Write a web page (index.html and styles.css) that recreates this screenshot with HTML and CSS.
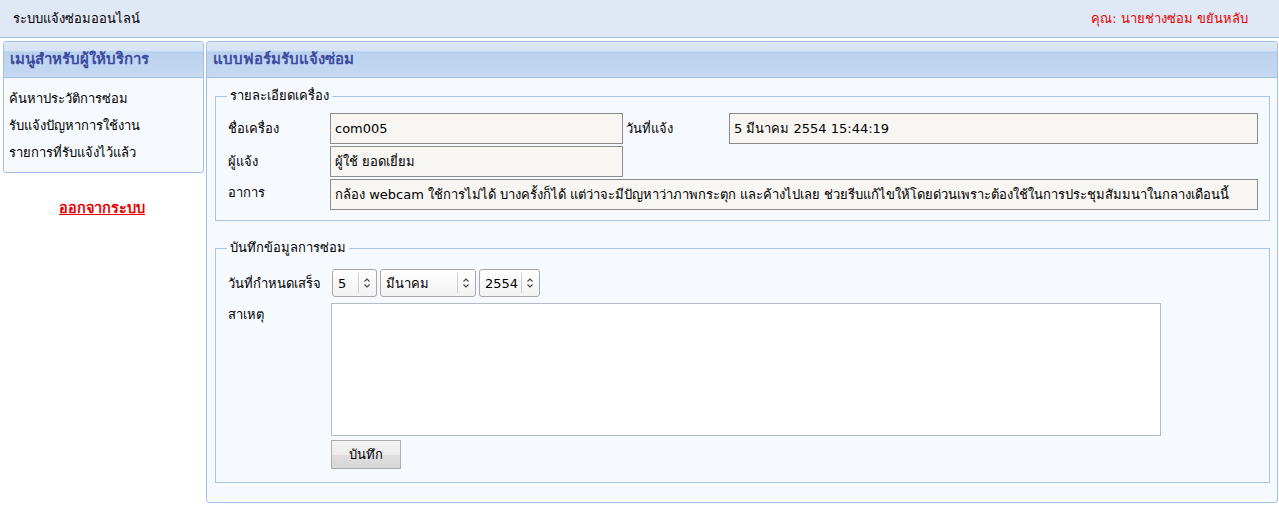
FILE: index.html
```html
<!DOCTYPE html>
<html lang="th">
<head>
<meta charset="utf-8">
<title>ระบบแจ้งซ่อมออนไลน์</title>
<link rel="stylesheet" href="styles.css">
</head>
<body>
<header class="topbar">
  <div class="site-title">ระบบแจ้งซ่อมออนไลน์</div>
  <div class="user">คุณ: นายช่างซ่อม ขยันหลับ</div>
</header>
<div class="layout">
  <aside class="side">
    <div class="panel">
      <div class="panel-head">เมนูสำหรับผู้ให้บริการ</div>
      <ul class="menu">
        <li>ค้นหาประวัติการซ่อม</li>
        <li>รับแจ้งปัญหาการใช้งาน</li>
        <li>รายการที่รับแจ้งไว้แล้ว</li>
      </ul>
    </div>
    <a class="logout" href="#">ออกจากระบบ</a>
  </aside>
  <main class="panel main">
    <div class="panel-head">แบบฟอร์มรับแจ้งซ่อม</div>
    <div class="main-body">
      <fieldset class="box">
        <legend>รายละเอียดเครื่อง</legend>
        <div class="grid-detail">
          <div class="lbl">ชื่อเครื่อง</div>
          <div class="field short">com005</div>
          <div class="lbl lbl2">วันที่แจ้ง</div>
          <div class="field date">5 มีนาคม 2554 15:44:19</div>
          <div class="lbl">ผู้แจ้ง</div>
          <div class="field short">ผู้ใช้ ยอดเยี่ยม</div>
          <div class="lbl top">อาการ</div>
          <div class="field wide">กล้อง webcam ใช้การไม่ได้ บางครั้งก็ได้ แต่ว่าจะมีปัญหาว่าภาพกระตุก และค้างไปเลย ช่วยรีบแก้ไขให้โดยด่วนเพราะต้องใช้ในการประชุมสัมมนาในกลางเดือนนี้</div>
        </div>
      </fieldset>
      <fieldset class="box box2">
        <legend>บันทึกข้อมูลการซ่อม</legend>
        <div class="grid-repair">
          <div class="lbl">วันที่กำหนดเสร็จ</div>
          <div class="selects">
            <span class="sel s-day"><select><option>5</option></select><svg class="arr" width="18" height="26" viewBox="0 0 18 26"><line x1="0.5" y1="3" x2="0.5" y2="23" stroke="#d0d0d0"/><path d="M6.5 11.5 L9 9 L11.5 11.5 M6.5 14.5 L9 17 L11.5 14.5" fill="none" stroke="#444" stroke-width="1.1"/></svg></span>
            <span class="sel s-month"><select><option>มีนาคม</option></select><svg class="arr" width="18" height="26" viewBox="0 0 18 26"><line x1="0.5" y1="3" x2="0.5" y2="23" stroke="#d0d0d0"/><path d="M6.5 11.5 L9 9 L11.5 11.5 M6.5 14.5 L9 17 L11.5 14.5" fill="none" stroke="#444" stroke-width="1.1"/></svg></span>
            <span class="sel s-year"><select><option>2554</option></select><svg class="arr" width="18" height="26" viewBox="0 0 18 26"><line x1="0.5" y1="3" x2="0.5" y2="23" stroke="#d0d0d0"/><path d="M6.5 11.5 L9 9 L11.5 11.5 M6.5 14.5 L9 17 L11.5 14.5" fill="none" stroke="#444" stroke-width="1.1"/></svg></span>
          </div>
          <div class="lbl top">สาเหตุ</div>
          <textarea class="cause"></textarea>
          <div></div>
          <button class="save" type="button">บันทึก</button>
        </div>
      </fieldset>
    </div>
  </main>
</div>
</body>
</html>
```
FILE: styles.css
```css
* { box-sizing: border-box; }
html, body { margin: 0; padding: 0; background: #fff; }
body {
  font-family: Tahoma, "DejaVu Sans", "Noto Sans", sans-serif;
  font-size: 13px;
  color: #000;
}
.topbar {
  height: 38px;
  background: #e0e8f5;
  border-bottom: 1px solid #a9bcd8;
  display: flex;
  align-items: center;
  justify-content: space-between;
  padding: 0 31px 0 13px;
}
.site-title { font-size: 13px; }
.user { color: #e60000; font-size: 13px; }

.layout {
  display: flex;
  align-items: flex-start;
  gap: 2px;
  padding: 3px 1px 0 3px;
}
.side { width: 201px; flex: none; }
.panel {
  border: 1px solid #a3c0e8;
  border-radius: 3px;
  background: #f6faff;
}
.panel-head {
  height: 36px;
  border-bottom: 1px solid #a0c0ea;
  background: linear-gradient(#dfe9f6 0, #d6e3f4 9px, #b3cdee 10px, #bcd3ef 12px, #c5d8f0 100%);
  color: #3c4ba1;
  font-weight: bold;
  font-size: 15px;
  padding: 8px 0 0 6px;
  line-height: 18px;
  border-radius: 2px 2px 0 0;
}
.menu {
  list-style: none;
  margin: 0;
  padding: 7px 0 6px 5px;
}
.menu li { line-height: 27px; }
.logout {
  display: block;
  text-align: center;
  margin-top: 23px;
  color: #e60000;
  font-weight: bold;
  font-size: 14.5px;
  text-decoration: underline;
  padding-right: 3px;
}
.main { flex: 1; min-height: 462px; }
.main-body { padding: 10px 7px 19px 8px; }

.box {
  border: 1px solid #a6c3e8;
  margin: 0;
  padding: 9px 11px 10px 12px;
}
.box legend {
  padding: 0 3px;
  margin-left: -1px;
  line-height: 16px;
}
.box2 { margin-top: 19px; padding-top: 13px; padding-bottom: 13px; }

.grid-detail {
  display: grid;
  grid-template-columns: 102px 293px 106px 1fr;
  row-gap: 2px;
}
.lbl { display: flex; align-items: center; }
.lbl.lbl2 { padding-left: 3px; }
.grid-detail .lbl.top { grid-column: 1; align-items: flex-start; padding-top: 3px; }
.field {
  height: 31px;
  border: 1px solid #8c8c8c;
  background: #f8f6f3;
  padding: 0 4px;
  display: flex;
  align-items: center;
  white-space: nowrap;
  overflow: hidden;
}
.field.wide { grid-column: 2 / 5; }

.grid-repair {
  display: grid;
  grid-template-columns: 103px 1fr;
  row-gap: 6px;
  align-items: start;
}
.grid-repair .lbl { height: 28px; }
.grid-repair .lbl.top { height: auto; padding-top: 1px; }
.selects { display: flex; gap: 3px; padding-left: 1px; }
.sel {
  position: relative;
  display: inline-block;
  height: 28px;
}
.sel select {
  appearance: none;
  -webkit-appearance: none;
  height: 28px;
  border: 1px solid #a8a8a8;
  border-radius: 3px;
  background: linear-gradient(#ffffff, #f2f2f2);
  font: inherit;
  color: #000;
  padding: 0 0 0 5px;
  margin: 0;
}
.sel .arr { position: absolute; right: 1px; top: 1px; pointer-events: none; }
.s-day select { width: 45px; }
.s-month select { width: 96px; }
.s-year select { width: 61px; }
.cause {
  width: 830px;
  height: 133px;
  border: 1px solid #b4bccb;
  background: #fff;
  resize: none;
  margin: 0;
}
.save {
  width: 70px;
  height: 29px;
  margin-top: -2px;
  border: 1px solid #acacac;
  background: linear-gradient(#f4f4f4 0, #ececec 50%, #dedede 51%, #d8d8d8 100%);
  font: inherit;
  font-size: 13px;
  color: #000;
  padding: 0;
}
```
